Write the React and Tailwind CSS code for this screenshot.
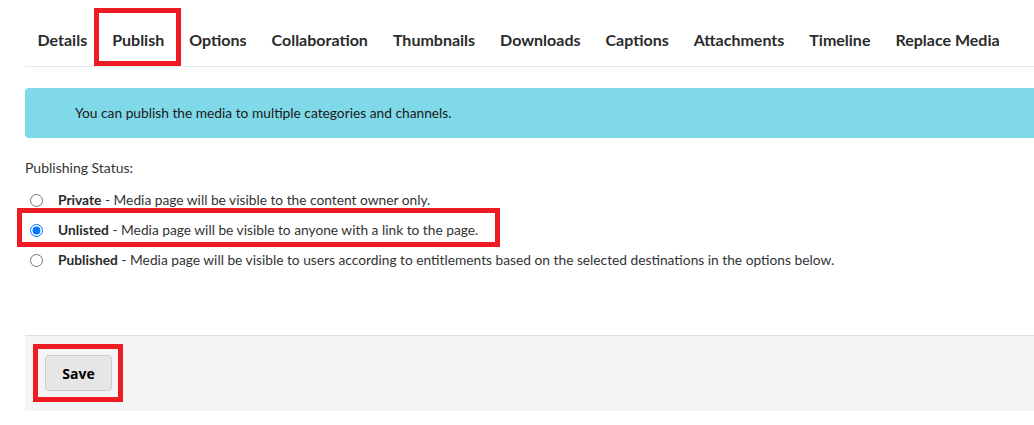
import { useState } from 'react'

const tabs = ['Details', 'Publish', 'Options', 'Collaboration', 'Thumbnails', 'Downloads', 'Captions', 'Attachments', 'Timeline', 'Replace Media']

const options = [
    { id: 'private', title: 'Private', text: 'Media page will be visible to the content owner only.' },
    { id: 'unlisted', title: 'Unlisted', text: 'Media page will be visible to anyone with a link to the page.' },
    { id: 'published', title: 'Published', text: 'Media page will be visible to users according to entitlements based on the selected destinations in the options below.' },
]

export default function App() {
    const [status, setStatus] = useState('unlisted')

    return (
        <div className="bg-white min-h-[425px] overflow-hidden pl-[25px] font-['Lato','Noto_Sans',sans-serif] text-[#333]">
            <div className="w-[1030px]">
                <nav className="flex border-b border-[#e8e8e8]">
                    {tabs.map((tab) => (
                        <div
                            key={tab}
                            className={"relative px-[12.5px] pt-[30px] pb-[11px] mb-[2px] leading-[20px] text-[16px] font-bold text-[#2b2b2b] border-b-[3px] " + (tab === 'Publish' ? 'border-[#00a9c9]' : 'border-transparent')}
                        >
                            {tab}
                            {tab === 'Publish' ?
                                <div className="absolute left-[-6px] right-[-4px] top-[8px] bottom-[-5px] border-[5px] border-[#ed1c24]"></div>
                            : ""}
                        </div>
                    ))}
                </nav>

                <div className="mt-[21px] h-[50px] rounded-[4px] bg-[#80d9e8] flex items-center pl-[50px] text-[13.75px] text-[#1a1a1a]">
                    You can publish the media to multiple categories and channels.
                </div>

                <div className="mt-[20px] leading-[20px] text-[14px]">Publishing Status:</div>

                <div className="mt-[7px]">
                    {options.map((opt) => (
                        <label key={opt.id} className="relative flex items-center h-[30px] text-[13.75px] cursor-pointer">
                            <input
                                type="radio"
                                name="status"
                                className="ml-[5px] w-[13px] h-[13px]"
                                checked={status === opt.id}
                                onChange={() => setStatus(opt.id)}
                            />
                            <span className="ml-[15px]">
                                <b className="font-bold text-[#2b2b2b]">{opt.title}</b> - {opt.text}
                            </span>
                            {opt.id === 'unlisted' ?
                                <div className="absolute left-[-8px] top-[-7px] w-[483px] h-[39px] border-[5px] border-[#ed1c24] pointer-events-none"></div>
                            : ""}
                        </label>
                    ))}
                </div>

                <div className="mt-[60px] border-t border-[#dddddd] bg-[#f4f4f4] h-[76px] pl-[20px] pt-[19px]">
                    <div className="relative inline-block">
                        <button className="w-[67px] h-[36px] rounded-[4px] border border-[#cccccc] bg-[#e6e6e6] text-[14px] font-bold text-black font-['Open_Sans',sans-serif]">
                            Save
                        </button>
                        <div className="absolute left-[-12px] right-[-11px] top-[-11px] bottom-[-11px] border-[5px] border-[#ed1c24]"></div>
                    </div>
                </div>
            </div>
        </div>
    )
}
